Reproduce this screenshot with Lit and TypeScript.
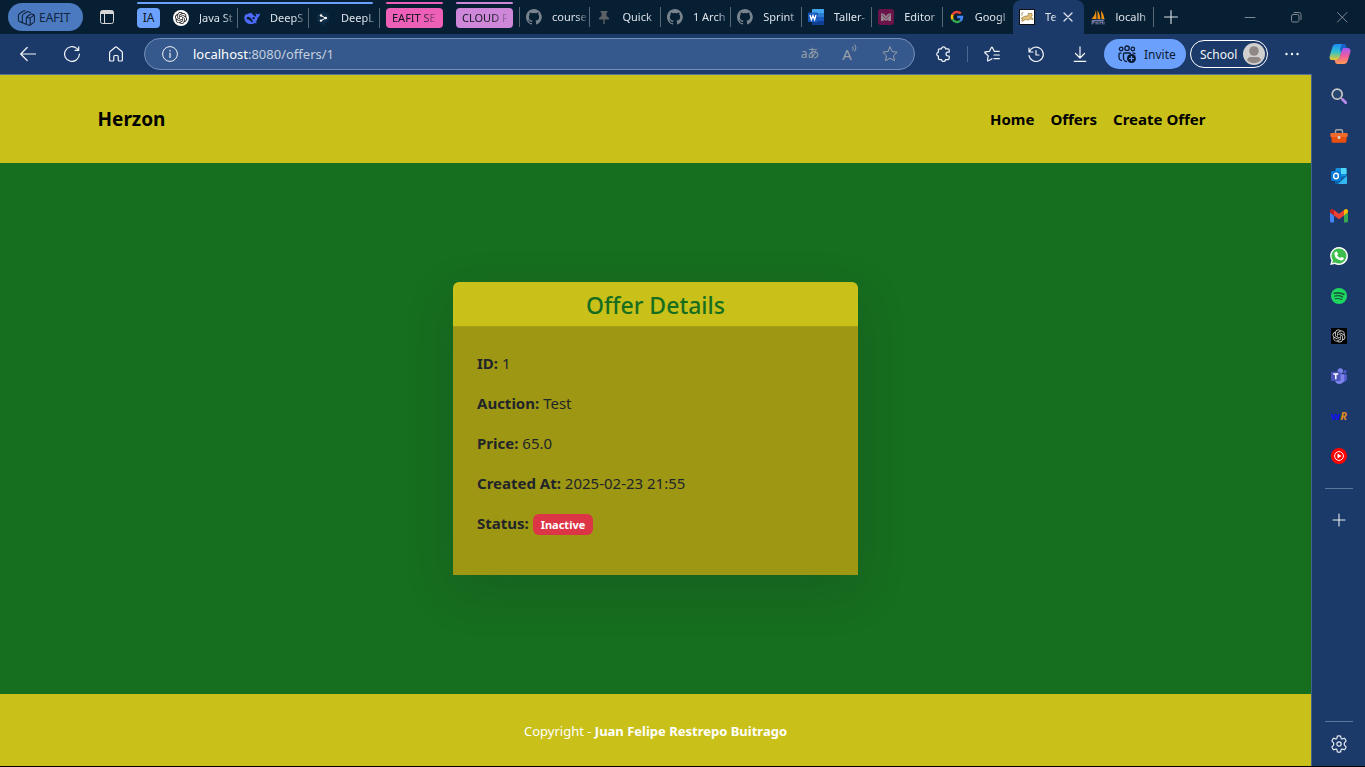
import { LitElement, html, css, svg, nothing, type TemplateResult } from "lit";
import { customElement, property } from "lit/decorators.js";
import { classMap } from "lit/directives/class-map.js";

const icon = (body: unknown, size = 16, box = 16) =>
  html`<svg width=${size} height=${size} viewBox="0 0 ${box} ${box}" aria-hidden="true">${body}</svg>`;

const line = (d: string, width = 1) =>
  svg`<path d=${d} fill="none" stroke="currentColor" stroke-width=${width} stroke-linecap="round" stroke-linejoin="round"/>`;

const knot = (color: string) => svg`
  <path fill=${color} transform="scale(.667)" d="M22.282 9.821a5.985 5.985 0 0 0-.516-4.910 6.046 6.046 0 0 0-6.510-2.900A6.065 6.065 0 0 0 4.981 4.180a5.985 5.985 0 0 0-3.998 2.900 6.046 6.046 0 0 0 .743 7.097 5.980 5.980 0 0 0 .511 4.911 6.051 6.051 0 0 0 6.515 2.900A5.985 5.985 0 0 0 13.260 24a6.056 6.056 0 0 0 5.772-4.206 5.990 5.990 0 0 0 3.998-2.900 6.056 6.056 0 0 0-.748-7.073zM13.260 22.430a4.476 4.476 0 0 1-2.876-1.040l.141-.081 4.779-2.758a.795.795 0 0 0 .393-.681v-6.737l2.020 1.169a.071.071 0 0 1 .038.052v5.583a4.504 4.504 0 0 1-4.495 4.493zM3.600 18.304a4.471 4.471 0 0 1-.535-3.014l.142.085 4.783 2.759a.771.771 0 0 0 .781 0l5.843-3.369v2.332a.080.080 0 0 1-.033.062L9.740 19.950a4.499 4.499 0 0 1-6.140-1.646zM2.341 7.896a4.485 4.485 0 0 1 2.365-1.973V11.600a.766.766 0 0 0 .388.677l5.815 3.354-2.020 1.169a.076.076 0 0 1-.071 0l-4.830-2.787A4.504 4.504 0 0 1 2.341 7.896zm16.596 3.856-5.833-3.388L15.119 7.200a.076.076 0 0 1 .071 0l4.830 2.791a4.494 4.494 0 0 1-.676 8.105v-5.678a.790.790 0 0 0-.407-.666zm2.011-3.024-.142-.085-4.774-2.782a.776.776 0 0 0-.785 0L9.409 9.230V6.897a.066.066 0 0 1 .028-.061l4.830-2.787a4.499 4.499 0 0 1 6.681 4.679zM8.307 12.863l-2.020-1.164a.080.080 0 0 1-.038-.057V6.075a4.499 4.499 0 0 1 7.376-3.454l-.142.081L8.704 5.460a.795.795 0 0 0-.393.681zm1.097-2.365 2.602-1.500 2.607 1.500v2.999l-2.597 1.500-2.607-1.500z"/>`;

const glyphs: Record<string, TemplateResult> = {
  workspace: icon(line("M4.500 13 2.500 12.200Q1.300 11.900 1.300 10.800V6.500Q1.300 5.600 2.100 5.100L5.300 2.900Q6 2.300 6.900 2.500M7.500 14.300 5.900 13.500Q4.700 13.100 4.700 12V7.200Q4.700 6.300 5.500 5.700L8.500 3.600Q9.200 3 10.100 3.300L12 4M8.500 8.200 11.500 5.800Q12.200 5.200 13 5.400L14.700 5.900Q15.500 6.200 15.500 7.100V11.500Q15.500 12.300 14.900 12.800L12.100 14.900Q11.400 15.400 10.600 15.200L9.200 14.900Q8.300 14.600 8.300 13.700V8.900Q8.300 8.300 9.100 8.400L11 8.800Q11.700 9 11.700 9.800V15M11.500 9 15.200 6.300"), 18),
  tabActions: icon(svg`<rect x="1.500" y="1.500" width="13" height="13" rx="2" fill="none" stroke="currentColor"/><path d="M1.500 3.500a2 2 0 0 1 2-2h9a2 2 0 0 1 2 2V5h-13z" fill="currentColor"/>${line("M5.500 5v9.500")}`),
  openai: icon(svg`<circle cx="8" cy="8" r="8" fill="#fff"/><g transform="translate(2 2) scale(.75)">${knot("#111")}</g>`),
  openaiDark: icon(svg`<rect width="16" height="16" fill="#000"/><g transform="translate(1.500 1.500) scale(.81)">${knot("#d0d0d0")}</g>`),
  deepseek: icon(svg`<path fill="#4d6bfe" d="M15.800 3.500c-.9-.2-1.300.7-2.100.8-.7.100-1.200-.6-1.700-1-.5.500-.4 1.900.3 2.600-.4.500-1 .6-1.500.4C9.700 5.500 8.900 4.300 7.600 3.700c.4-.4.500-.8.100-.9C6 3 4.800 3.500 3.600 4 1.400 4.100.2 5.700.3 7.900c.2 3.300 2.700 6 6 6.200 1.700.100 3.200-.3 4.300-1.200.7.500 1.900.5 2.300.2-.100-.4-.9-.6-1.200-1 1.300-1.400 1.800-3 2-4.700 1.300-.3 2.300-2.200 2.100-3.900z"/><path fill="#071f33" d="M4.400 6.800c1.500.3 2.800 1.600 3.500 3 .5.900.8 1.600 1.500 2.100-1.800 1-2.300-.6-3.500-1.600-1.300-1-2.500-.9-3.300-1.400-.2-1 .5-2.300 1.800-2.100z"/><circle cx="9.600" cy="8.200" r="1.100" fill="#071f33"/>`),
  deepl: icon(svg`<path fill="#0d2b44" d="m8 1 6 3.400v6.800L10 13.500V16l-8-4.800V4.400z"/><path d="m6 5.500 4.600 2.600L6 10.700" stroke="#fff" fill="none"/><g fill="#fff"><circle cx="6" cy="5.400" r="1.200"/><circle cx="10.800" cy="8" r="1.200"/><circle cx="6" cy="10.600" r="1.200"/></g>`),
  github: icon(svg`<path fill="#78838d" d="M8 0C3.580 0 0 3.580 0 8c0 3.540 2.290 6.530 5.470 7.590.4.070.55-.17.55-.38v-1.330c-2.010.37-2.530-.49-2.690-.94-.09-.23-.48-.94-.82-1.130-.28-.15-.68-.52-.01-.53.63-.01 1.080.58 1.230.82.72 1.210 1.870.87 2.330.66.07-.52.28-.87.51-1.070-1.780-.2-3.640-.89-3.640-3.950 0-.87.31-1.590.82-2.150-.08-.2-.36-1.020.08-2.120 0 0 .67-.21 2.200.82a7.600 7.600 0 0 1 4 0c1.530-1.040 2.200-.82 2.200-.82.44 1.100.16 1.920.08 2.120.51.56.82 1.270.82 2.150 0 3.070-1.870 3.750-3.650 3.950.29.25.54.73.54 1.480v1.950c0 .21.15.46.55.38A8 8 0 0 0 8 0z"/>`),
  pin: icon(svg`<path fill="#5b6164" d="M4.500 2h7v1.500h-1V7l2.500 2v1.500H8.700V15H7.300v-4.500H3V9l2.500-2V3.500h-1z"/>`),
  word: icon(svg`<rect x="4" width="12" height="16" rx="1" fill="#2b7cd3"/><path fill="#41a5ee" d="M4 1a1 1 0 0 1 1-1h10a1 1 0 0 1 1 1v3H4z"/><path fill="#103f91" d="M4 12h12v3a1 1 0 0 1-1 1H5a1 1 0 0 1-1-1z"/><path fill="#185abd" d="M4 8h12v4H4z"/><rect y="3.500" width="10" height="9.500" rx="1" fill="#185abd"/><path d="m2 6 1.400 4.800L5 6.500l1.600 4.300L8 6" fill="none" stroke="#fff" stroke-width="1.300"/>`),
  mermaid: icon(svg`<rect width="16" height="16" rx="3" fill="#6b1449"/><path fill="#96858f" d="M3 4.200Q6.500 4.200 8 7.500 9.500 4.200 13 4.200V12H10.300V9.800L9.300 11.500H6.700L5.700 9.800V12H3z"/><path d="m4 5.500 3.500 4M12 5.500l-3.500 4" stroke="#6b1449" stroke-width=".8"/>`),
  google: icon(svg`<g fill="none" stroke-width="2.800"><path stroke="#ea4335" d="M12.300 4A5.800 5.800 0 0 0 3 5.200"/><path stroke="#fbbc05" d="M3 5.200a5.800 5.800 0 0 0 0 5.600"/><path stroke="#34a853" d="M3 10.800a5.800 5.800 0 0 0 8.700 1.600"/><path stroke="#4285f4" d="M11.700 12.400A5.800 5.800 0 0 0 13.700 8H8.200"/></g>`, 14),
  tomcat: icon(svg`<rect x=".5" y=".5" width="15" height="15" fill="#fff" stroke="#111"/><path fill="#e3c078" stroke="#8a6a2a" stroke-width=".6" d="m2 9.500 3-2 4-.8L9.500 4l1.500.8L12.500 4l.8 2.500-2 1.800 2.700 1.200v1l-3-.5-1.500 1-3-.5-2.500 1.500H2.500l1.500-2z"/><path d="m2 4.500 2.500-1M2 6.500l2-1.500" stroke="#a08a60" stroke-width=".8"/>`),
  phpmyadmin: icon(svg`<path fill="#f29111" d="M6 .5Q5.500 6 1.500 10H6.500zM7.500 1Q10 5 10.500 10H7.500zM11 1.500Q14 5 14.500 10L11.500 10z"/><path d="m1 11 14-.5-2 1.800H3z" fill="#777fae"/><path d="M2 15.500v-3h2v1.500H2m4-1.500v3m0-1.500h2m0-1.500v3m2-3v3m0-3 1.300 1.500 1.200-1.500v3m1.500 0v-3" stroke="#888eb8" fill="none" stroke-width=".8"/>`),
  close: icon(line("m4 4 8 8m0-8-8 8", 1.3)),
  plus: icon(line("M8 1.500v13M1.500 8h13", 1.1)),
  minimise: icon(line("M3 8.500h10")),
  restore: icon(svg`<rect x="3.500" y="5.500" width="7.500" height="7.500" rx="1.500" fill="none" stroke="currentColor"/>${line("M6 3.500h5a2 2 0 0 1 2 2v5")}`),
  closeWindow: icon(line("m3.500 3.500 9.500 9.500m0-9.500L3.500 13")),
  back: icon(line("M15.500 8H.8m6.400-6.500L.7 8l6.500 6.500", 1.2)),
  reload: icon(line("M15.400 8a7.400 7.400 0 1 1-2.600-5.600l1.700 1.700M14.700.8v3.500h-3.600", 1.2)),
  home: icon(line("M1.600 6.700Q1.600 6 2.200 5.500L7.200 1.200Q8 .6 8.800 1.200L13.800 5.500Q14.400 6 14.400 6.700V14Q14.400 15 13.400 15H11.200Q10.200 15 10.200 14V10.500Q10.200 9.500 9.200 9.500H6.800Q5.800 9.500 5.800 10.500V14Q5.800 15 4.800 15H2.600Q1.600 15 1.600 14Z", 1.2)),
  info: icon(svg`<circle cx="8" cy="8" r="7.400" fill="none" stroke="currentColor"/>${line("M8 7v4.500", 1.2)}<circle cx="8" cy="4.800" r=".8" fill="currentColor"/>`),
  star: icon(line("m8 1 2.200 4.500 4.900.7-3.600 3.500.9 4.900L8 12.300l-4.400 2.300.9-4.900L.9 6.200l4.900-.7z")),
  puzzle: icon(line("M6.500 2.800a2 2 0 0 1 4 0h2.400q1.300 0 1.300 1.300V6.200h-1.300a1.900 1.900 0 0 0 0 3.800h1.300v2.300q0 1.300-1.300 1.300H10.500a2 2 0 0 1-4 0H4.700q-1.300 0-1.300-1.300V10.200a2.100 2.100 0 0 1 0-4.100V4.100q0-1.300 1.300-1.300z", 1.2)),
  favourites: icon(line("M5 14.500 4.200 14.800Q3.300 15.200 3.500 14.200L4.200 9.900.9 6.700Q.4 6 1.300 5.800L5.500 5.300 7.400 1.500Q7.900.8 8.400 1.500L10.200 5.300H15.300M10 9h5.300M10 12.700h5.300M5 14.500 8 12.700", 1.2)),
  history: icon(line("M1 2v4h4M1.400 5.600A7.200 7.200 0 1 1 1 9.500M8 4.500V9h3", 1.2)),
  download: icon(line("M8 .8v11M3.500 7.500 8 12l4.500-4.500M2.200 15.300h11.600", 1.2)),
  people: icon(svg`<g fill="none" stroke="currentColor" stroke-width="1.300"><circle cx="3.200" cy="4" r="1.800"/><circle cx="9" cy="3.200" r="2.200"/><circle cx="14.800" cy="4" r="1.800"/><path d="M4 15.500a3 3 0 0 1-3-3V9.200q0-1 1-1h1.500M9 16.500a3.500 3.500 0 0 1-3.500-3.500V9q0-1 1-1h5q1 0 1 1M14.500 8.200H16q1 0 1 1"/></g><circle cx="13.500" cy="13.500" r="4.500" fill="currentColor"/><path d="M13.500 11v5M11 13.500h5" stroke="#6ba1fc" stroke-width="1.200"/>`, 18, 18),
  avatar: icon(svg`<circle cx="11" cy="11" r="11" fill="#d2d0ce"/><circle cx="11" cy="8" r="4.800" fill="#8f8884"/><path fill="#8f8884" d="M4.200 17.500q0-3.500 3.500-3.500h6.600q3.500 0 3.500 3.500a10 10 0 0 1-13.600 0z"/>`, 22, 22),
  more: icon(svg`<g fill="currentColor"><circle cx="2.500" cy="8" r="1.200"/><circle cx="8" cy="8" r="1.200"/><circle cx="13.500" cy="8" r="1.200"/></g>`),
  copilot: icon(svg`<defs><linearGradient id="ca" x2="0" y2="1"><stop stop-color="#1c8cf5"/><stop offset=".5" stop-color="#31c1cd"/><stop offset="1" stop-color="#f0c828"/></linearGradient><linearGradient id="cb" x2="0" y2="1"><stop stop-color="#a35bf5"/><stop offset=".5" stop-color="#ef5c9c"/><stop offset="1" stop-color="#ff9b50"/></linearGradient></defs><path fill="url(#ca)" d="M7 1h7.500q1.800 0 2.400 1.900L17.500 5h-2.400q-1.500 0-2 1.700L10.600 15Q10 17 8 17H3.500Q-.2 17 .8 12.800L3.400 4Q4.400 1 7 1z"/><path fill="#1660cf" d="M13 1h1.500q1.800 0 2.400 1.900L17.500 5h-2.400q-1.500 0-2 1.700L12 10.300 11 6z"/><path fill="url(#cb)" d="M15 21H8.500q-1.900 0-2.400-1.900L5.500 17H8q2 0 2.600-2l2.500-8.300Q13.600 5 15.100 5h3.500q3.700 0 2.700 4.200L18.600 18Q17.600 21 15 21z"/>`, 22, 22),
  search: icon(svg`<circle cx="6.200" cy="6.200" r="5" fill="#27466f" stroke="#c9c7c4" stroke-width="1.700"/><path d="m10 10 1.800 1.800" stroke="#aaa" stroke-width="1.500"/><path d="m11.600 11.600 3.200 3.200" stroke="#b88aec" stroke-width="2.800" stroke-linecap="round"/>`),
  toolbox: icon(svg`<path d="M5.500 6V4Q5.500 2.700 7 2.700h4Q12.500 2.700 12.500 4v2" fill="none" stroke="#aaa" stroke-width="1.400"/><path fill="#e8500f" d="M1.200 9h15.600l-.5 6q-.1.800-.9.800H2.600q-.8 0-.9-.8z"/><rect x=".3" y="6" width="17.400" height="4" rx="1" fill="#f06a2a"/><rect x="7.700" y="9" width="2.600" height="3" rx="1" fill="#d8d8d8"/>`, 18, 18),
  outlook: icon(svg`<rect x="4.500" width="11" height="11" rx="1" fill="#1490df"/><path fill="#50d9ff" d="M10 0h4.500q1 0 1 1v5H10z"/><path fill="#28a8ea" d="M4.500 5H10v5H4.500z"/><path fill="#0a64ad" d="m4 9 12-1v7q0 1-1 1H5q-1 0-1-1z"/><path fill="#35b8f1" d="m16 8-9 8h8q1 0 1-1z"/><rect y="3" width="10" height="10" rx="1" fill="#0078d4"/><ellipse cx="5" cy="8" rx="2.400" ry="2.700" fill="none" stroke="#fff" stroke-width="1.400"/>`),
  gmail: icon(svg`<path fill="#4285f4" d="M0 5.500 4 8.500V15.500H1.500Q0 15.500 0 14z"/><path fill="#34a853" d="m14 8.500 4-3V14q0 1.500-1.500 1.500H14z"/><path fill="#c5221f" d="M0 5.500V4Q0 1.900 1.900 1.900 2.500 1.900 4 3v5.500z"/><path fill="#fbbc04" d="M14 3q1.500-1.100 2.100-1.100Q18 1.900 18 4v1.500l-4 3z"/><path fill="#ea4335" d="m4 3 5 3.800L14 3v5.500l-5 3.700-5-3.700z"/>`, 18, 18),
  whatsapp: icon(svg`<path fill="#fff" d="M9 0a9 9 0 1 1-4.200 17L.2 18l1.200-4.400A9 9 0 0 1 9 0z"/><path fill="#3dbd4c" d="M9 1.500a7.500 7.500 0 1 1-4 13.900l-2.800.7.800-2.700A7.500 7.500 0 0 1 9 1.500z"/><path fill="#fff" d="M6.500 4.600q.5 0 .7.500l.7 1.700q.100.300-.1.600l-.7.900q1 2 3.200 2.800l.9-1q.3-.3.600-.100l1.700.8q.4.200.3.700-.3 1.900-2.400 1.900-6.100-.8-7.100-6.500 0-1.900 2.200-2.300z"/>`, 18, 18),
  spotify: icon(svg`<circle cx="8" cy="8" r="8" fill="#1ed760"/><g fill="none" stroke="#17563b" stroke-linecap="round"><path d="M3.300 5.300q5-1.300 9.500 1" stroke-width="1.600"/><path d="M3.700 8.100q4.300-1.100 8 1" stroke-width="1.300"/><path d="M4.100 10.700q3.700-.8 6.700.8" stroke-width="1.100"/></g>`),
  teams: icon(svg`<circle cx="9.300" cy="3" r="2.700" fill="#7b83eb"/><circle cx="14" cy="3.700" r="1.700" fill="#5059c9"/><path fill="#5059c9" d="M11 6.300h4.200q.8 0 .8.800v4a3 3 0 0 1-5 2z"/><path fill="#7b83eb" d="M5.500 6.300h7q.8 0 .8.800V11a4.800 4.800 0 0 1-9 2.500z"/><rect y="3.700" width="9.500" height="9.300" rx="1" fill="#4b53bc"/><path d="M2.300 6h5M4.800 6v5.300" stroke="#fff" stroke-width="1.500"/>`),
  youtube: icon(svg`<circle cx="8" cy="8" r="8" fill="#f00"/><circle cx="8" cy="8" r="4.400" fill="none" stroke="#fff"/><path d="m6.500 5.500 4 2.500-4 2.500z" fill="#fff"/>`),
  gear: icon(svg`<circle cx="9" cy="9" r="2.200" fill="none" stroke="currentColor" stroke-width="1.200"/>${line("M7.300 1.200Q9 .7 10.700 1.200L11 3.200Q11.300 4.200 12.400 3.900L14.400 3.200Q15.600 4.500 16.100 6.100L14.600 7.600Q13.600 9 14.600 10.400L16.100 11.900Q15.600 13.500 14.400 14.800L12.400 14.100Q11.300 13.800 11 14.800L10.700 16.800Q9 17.300 7.300 16.800L7 14.800Q6.700 13.800 5.600 14.100L3.600 14.800Q2.400 13.500 1.900 11.900L3.400 10.400Q4.400 9 3.400 7.600L1.900 6.100Q2.400 4.500 3.600 3.200L5.600 3.900Q6.700 4.200 7 3.200Z", 1.2)}`, 18, 18),
};

const reset = css`
  * { box-sizing: border-box; }
  button { border: 0; margin: 0; padding: 0; background: none; color: inherit; font: inherit; cursor: pointer; }
  svg { display: block; flex: none; }
`;

interface Tab { icon: string; title: string; active?: boolean }

@customElement("tab-strip")
class TabStrip extends LitElement {
  static styles = [reset, css`
    :host { display: flex; align-items: stretch; height: 34px; background: #071f33; color: #dde3ea; font-size: 12px; }
    .workspace { align-self: center; display: flex; align-items: center; gap: 4px; width: 75px; height: 28px; margin: 0 12px 0 8px; padding-left: 9px; border-radius: 14px; background: #4c7ac0; color: #10253f; flex: none; }
    .actions { flex: none; width: 24px; display: grid; place-items: center; color: #d7d7d7; margin-right: 18px; }
    .group { position: relative; display: flex; align-items: center; flex: none; padding-top: 1px; }
    .group::before { content: ""; position: absolute; top: 2px; left: 0; right: 0; height: 2px; border-radius: 1px; background: currentColor; }
    .blue { color: #6ba1fc; margin-right: 6px; }
    .blue::before { right: 7px; }
    .pink { color: #ee5fb7; margin-right: 13px; }
    .violet { color: #cf87da; margin-right: 6px; }
    .label { height: 20px; border-radius: 4px; background: currentColor; width: 57px; padding: 0 4px 0 6px; text-align: left; }
    .blue .label { width: 23px; margin-right: 7px; padding: 0; text-align: center; }
    .label span { display: block; white-space: nowrap; color: #101820; line-height: 20px; }
    .pink span, .violet span { font-size: 11px; }
    .pink span, .violet span, .title { mask-image: linear-gradient(to right, #000 65%, transparent); }
    .tabs { flex: 1; display: flex; min-width: 0; }
    .rule { width: 1px; height: 20px; align-self: center; background: #5a6874; flex: none; }
    .tab { position: relative; flex: 1 1 0; min-width: 0; display: flex; align-items: center; gap: 10px; height: 34px; padding: 0 1px 0 6px; color: #dde3ea; text-align: left; }
    .group .tab { flex: none; width: 71px; height: 33px; }
    .tab::after { content: ""; position: absolute; right: 0; top: 7px; height: 20px; width: 1px; background: #5a6874; }
    .active { background: #1c3a69; border-radius: 8px 8px 0 0; }
    .active::after, .plain::after { display: none; }
    .favicon { width: 16px; height: 16px; display: grid; place-items: center; flex: none; }
    .title { flex: 1; min-width: 0; overflow: hidden; white-space: nowrap; font-size: 11px; line-height: 20px; }
    .active .title { flex: none; width: 13px; }
    .close { margin-left: -8px; }
    .new { width: 34px; display: grid; place-items: center; flex: none; }
    .windows { display: flex; margin-left: 39px; color: #7d8893; flex: none; }
    .windows button { width: 46px; display: grid; place-items: center; }
  `];

  private tab(t: Tab, plain = false) {
    return html`<div class=${classMap({ tab: true, active: !!t.active, plain })} role="tab" aria-selected=${t.active ? "true" : "false"}>
      <span class="favicon">${glyphs[t.icon]}</span><span class="title">${t.title}</span>
      ${t.active ? html`<button class="close" aria-label="Close tab">${glyphs.close}</button>` : nothing}
    </div>`;
  }

  render() {
    const ai: Tab[] = [
      { icon: "openai", title: "Java St" },
      { icon: "deepseek", title: "DeepS" },
      { icon: "deepl", title: "DeepL" },
    ];
    const open: Tab[] = [
      { icon: "github", title: "course" },
      { icon: "pin", title: "Quick" },
      { icon: "github", title: "1 Arch" },
      { icon: "github", title: "Sprint" },
      { icon: "word", title: "Taller-" },
      { icon: "mermaid", title: "Editor" },
      { icon: "google", title: "Googl" },
      { icon: "tomcat", title: "Te", active: true },
      { icon: "phpmyadmin", title: "localh" },
    ];
    return html`
      <button class="workspace">${glyphs.workspace}<span>EAFIT</span></button>
      <button class="actions" aria-label="Tab actions">${glyphs.tabActions}</button>
      <div class="group blue"><button class="label"><span>IA</span></button>${ai.map((t) => this.tab(t))}</div>
      <div class="group pink"><button class="label"><span>EAFIT SE</span></button></div>
      <div class="group violet"><button class="label"><span>CLOUD F</span></button></div>
      <div class="rule"></div>
      <div class="tabs" role="tablist">${open.map((t, i) => this.tab(t, !!open[i + 1]?.active))}</div>
      <button class="new" aria-label="New tab">${glyphs.plus}</button>
      <div class="windows">
        <button aria-label="Minimise">${glyphs.minimise}</button>
        <button aria-label="Restore">${glyphs.restore}</button>
        <button aria-label="Close">${glyphs.closeWindow}</button>
      </div>`;
  }
}

@customElement("nav-toolbar")
class NavToolbar extends LitElement {
  static styles = [reset, css`
    :host { display: flex; align-items: center; height: 40px; padding-left: 6px; background: #1c3a69; color: #f2f5f9; font-size: 12px; }
    .tool { width: 44px; height: 32px; display: grid; place-items: center; flex: none; }
    .address { flex: 1; min-width: 0; height: 32px; margin: 0 6px; display: flex; align-items: center; border: 1px solid #7590b8; border-radius: 16px; background: #35598d; padding: 0 4px 0 17px; }
    .url { flex: 1; min-width: 0; margin-left: 15px; font-size: 13px; line-height: 20px; color: #c3cfde; white-space: nowrap; }
    .host { color: #fff; }
    .hint { width: 40px; height: 30px; display: grid; place-items: center; color: #9aa0a9; flex: none; }
    .translate { font-family: "Noto Sans", "Noto Sans CJK JP", sans-serif; font-size: 12px; line-height: 16px; }
    .aloud { display: flex; align-items: center; justify-content: center; font-size: 15px; line-height: 20px; }
    .waves { align-self: flex-start; margin-top: 5px; }
    .split { width: 1px; height: 16px; margin: 0 2px; background: #4d6890; flex: none; }
    .invite { width: 82px; height: 30px; margin-left: 2px; border-radius: 15px; background: #6ba1fc; color: #0b1a33; display: flex; align-items: center; gap: 8px; padding-left: 14px; flex: none; }
    .school { width: 78px; height: 28px; margin: 0 2px 0 4px; border: 1px solid #fff; border-radius: 14px; display: flex; align-items: center; justify-content: space-between; padding: 0 2px 0 9px; flex: none; }
    .copilot { width: 51px; height: 32px; display: grid; place-items: center; flex: none; }
  `];

  render() {
    const tool = (name: string, label: string) => html`<button class="tool" aria-label=${label}>${glyphs[name]}</button>`;
    return html`
      ${tool("back", "Back")}${tool("reload", "Refresh")}${tool("home", "Home")}
      <div class="address">
        ${glyphs.info}
        <div class="url" role="textbox" aria-label="Address" tabindex="0"><span class="host">localhost</span>:8080/offers/1</div>
        <button class="hint translate" aria-label="Translate">aあ</button>
        <button class="hint aloud" aria-label="Read aloud"><span>A</span><svg class="waves" width="6" height="9" viewBox="0 0 6 9"><path d="M.5 2.500q1.500 1.500 0 4M2.500.5q3 3.300 0 7" fill="none" stroke="currentColor"/></svg></button>
        <button class="hint" aria-label="Add to favourites">${glyphs.star}</button>
      </div>
      ${tool("puzzle", "Extensions")}
      <div class="split"></div>
      ${tool("favourites", "Favourites")}${tool("history", "History")}${tool("download", "Downloads")}
      <button class="invite">${glyphs.people}<span>Invite</span></button>
      <button class="school"><span>School</span>${glyphs.avatar}</button>
      ${tool("more", "Settings and more")}
      <button class="copilot" aria-label="Copilot">${glyphs.copilot}</button>`;
  }
}

@customElement("side-bar")
class SideBar extends LitElement {
  static styles = [reset, css`
    :host { box-sizing: border-box; display: flex; flex-direction: column; align-items: center; width: 54px; padding: 2px 0 2px 1px; border-left: 1px solid #46618c; background: #1c3a69; color: #e6ebf2; flex: none; }
    .item { width: 40px; height: 40px; display: grid; place-items: center; flex: none; }
    .monogram { font: bold 11px/16px "Open Sans", sans-serif; }
    .w { color: #1010f0; }
    .r { color: #e08a1e; font-style: italic; }
    .rule { width: 28px; height: 1px; background: #5d779b; margin: 12px 0 11px; flex: none; }
    .spacer { flex: 1; }
    .low { margin-bottom: 2px; }
  `];

  render() {
    const item = (name: string, label: string) => html`<button class="item" aria-label=${label}>${glyphs[name]}</button>`;
    return html`
      ${item("search", "Search")}${item("toolbox", "Tools")}${item("outlook", "Outlook")}${item("gmail", "Gmail")}
      ${item("whatsapp", "WhatsApp")}${item("spotify", "Spotify")}${item("openaiDark", "ChatGPT")}${item("teams", "Teams")}
      <button class="item"><span class="monogram"><span class="w">w</span><span class="r">R</span></span></button>
      ${item("youtube", "YouTube Music")}
      <div class="rule"></div>
      <button class="item" aria-label="Customise">${icon(line("M8 2v12M2 8h12", 1.1))}</button>
      <div class="spacer"></div>
      <div class="rule low"></div>
      ${item("gear", "Settings")}`;
  }
}

@customElement("offer-page")
class OfferPage extends LitElement {
  @property({ attribute: false }) offer = {
    id: 1, auction: "Test", price: "65.0", createdAt: "2025-02-23 21:55", status: "Inactive",
  };

  static styles = [reset, css`
    :host { display: flex; flex-direction: column; background: #166e1f; color: #212529; font-size: 15px; line-height: 24px; min-width: 0; }
    header { background: #c9c11a; padding: 24px 0; }
    .container { max-width: 1140px; margin: 0 auto; padding: 0 12px; display: flex; align-items: center; justify-content: space-between; min-height: 40px; }
    a { color: #000; text-decoration: none; font-weight: bold; }
    .brand { font-size: 19px; line-height: 30px; }
    nav { display: flex; gap: 16px; padding-right: 8px; }
    main { flex: 1; display: grid; place-items: center; padding: 24px; }
    .card { width: 100%; max-width: 405px; border-radius: 6px 6px 0 0; box-shadow: 0 16px 48px rgba(33, 37, 41, 0.175); }
    h1 { margin: 0; padding: 9px 16px 7px; font-size: 23px; line-height: 28px; font-weight: 500; text-align: center; color: #176d1f; background: #c9c11a; border-bottom: 1px solid #a59e17; border-radius: 6px 6px 0 0; }
    .details { padding: 24px; background: #9e9714; }
    p { margin: 0 0 16px; }
    .badge { display: inline-block; padding: 4px 8px; border-radius: 6px; background: #dc3545; color: #fff; font-size: 11px; line-height: 13px; font-weight: bold; vertical-align: baseline; }
    footer { background: #c9c11a; color: #fff; padding: 25px 24px 23px; text-align: center; font-size: 13px; }
  `];

  render() {
    const o = this.offer;
    return html`
      <header><div class="container">
        <a class="brand" href="#">Herzon</a>
        <nav><a href="#">Home</a><a href="#">Offers</a><a href="#">Create Offer</a></nav>
      </div></header>
      <main><section class="card">
        <h1>Offer Details</h1>
        <div class="details">
          <p><strong>ID:</strong> ${o.id}</p>
          <p><strong>Auction:</strong> ${o.auction}</p>
          <p><strong>Price:</strong> ${o.price}</p>
          <p><strong>Created At:</strong> ${o.createdAt}</p>
          <p><strong>Status:</strong> <span class="badge">${o.status}</span></p>
        </div>
      </section></main>
      <footer>Copyright - <strong>Juan Felipe Restrepo Buitrago</strong></footer>`;
  }
}

@customElement("app-root")
class AppRoot extends LitElement {
  static styles = css`
    :host { display: flex; flex-direction: column; min-height: 100vh; box-sizing: border-box; border-bottom: 1px solid #000; font-family: "Noto Sans", "Open Sans", sans-serif; background: #1c3a69; }
    .view { flex: 1; display: flex; }
    offer-page { flex: 1; border-top: 1px solid #5b7399; }
  `;

  render() {
    return html`<tab-strip></tab-strip><nav-toolbar></nav-toolbar>
      <div class="view"><offer-page></offer-page><side-bar></side-bar></div>`;
  }
}
